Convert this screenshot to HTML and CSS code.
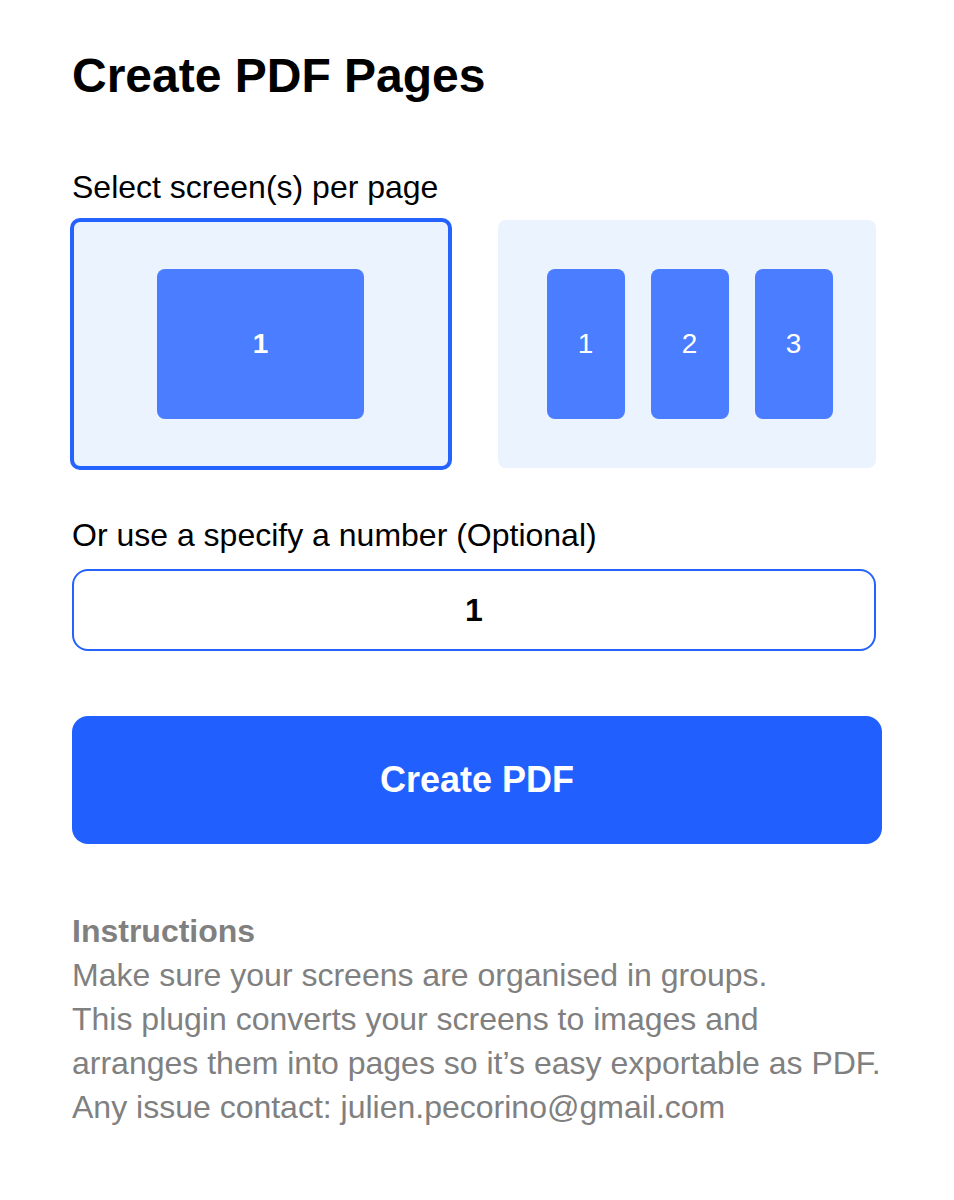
FILE: index.html
```html
<!DOCTYPE html>
<html lang="en">
<head>
<meta charset="utf-8">
<title>Create PDF Pages</title>
<link rel="stylesheet" href="styles.css">
</head>
<body>
<main class="app">
  <h1 class="title">Create PDF Pages</h1>

  <p class="label">Select screen(s) per page</p>
  <div class="options">
    <div class="option option-selected">
      <div class="screen screen-wide screen-bold">1</div>
    </div>
    <div class="option">
      <div class="screen screen-tall">1</div>
      <div class="screen screen-tall">2</div>
      <div class="screen screen-tall">3</div>
    </div>
  </div>

  <p class="label label-number">Or use a specify a number (Optional)</p>
  <input class="number-input" type="text" value="1">

  <button class="create-btn" type="button">Create PDF</button>

  <section class="instructions">
    <h2 class="instructions-title">Instructions</h2>
    <p class="instructions-line">Make sure your screens are organised in groups.</p>
    <p class="instructions-line">This plugin converts your screens to images and</p>
    <p class="instructions-line">arranges them into pages so it’s easy exportable as PDF.</p>
    <p class="instructions-line">Any issue contact: julien.pecorino@gmail.com</p>
  </section>
</main>
</body>
</html>
```

FILE: styles.css
```css
* {
  box-sizing: border-box;
}

html, body {
  margin: 0;
  padding: 0;
  background: #ffffff;
}

body {
  font-family: "Liberation Sans", Arial, Helvetica, sans-serif;
  color: #000000;
}

.app {
  padding: 48px 0 40px 72px;
  width: 954px;
}

.title {
  margin: 0;
  font-size: 48px;
  line-height: 56px;
  font-weight: 700;
}

.label {
  margin: 61px 0 0 0;
  font-size: 32px;
  line-height: 44px;
  font-weight: 400;
}

.label-number {
  margin-top: 45px;
}

.options {
  display: flex;
  gap: 48px;
  margin-top: 11px;
  width: 804px;
}

.option {
  width: 378px;
  height: 248px;
  background: #ebf3ff;
  border-radius: 8px;
  display: flex;
  align-items: center;
  justify-content: center;
  gap: 26px;
  padding-left: 5px;
}

.option-selected {
  border: 2px solid #2563ff;
  box-shadow: 0 0 0 2px #2563ff;
  padding-left: 0;
  padding-right: 1px;
}

.screen {
  background: #4a7dff;
  border-radius: 8px;
  height: 150px;
  color: #ffffff;
  font-size: 28px;
  display: flex;
  align-items: center;
  justify-content: center;
}

.screen-wide {
  width: 207px;
}

.screen-tall {
  width: 78px;
}

.screen-bold {
  font-weight: 700;
}

.number-input {
  display: block;
  margin-top: 12px;
  width: 804px;
  height: 82px;
  border: 2px solid #2563ff;
  border-radius: 16px;
  background: #ffffff;
  font-family: "Liberation Sans", Arial, Helvetica, sans-serif;
  font-size: 32px;
  font-weight: 700;
  color: #000000;
  text-align: center;
  padding: 0;
  outline: none;
}

.create-btn {
  display: block;
  margin-top: 65px;
  width: 810px;
  height: 128px;
  border: none;
  border-radius: 16px;
  background: #2160ff;
  color: #ffffff;
  font-family: "Liberation Sans", Arial, Helvetica, sans-serif;
  font-size: 36px;
  font-weight: 700;
  padding: 0;
}

.instructions {
  margin-top: 65px;
  color: #808080;
  font-size: 32px;
  line-height: 44px;
}

.instructions-title {
  margin: 0;
  font-size: 32px;
  line-height: 44px;
  font-weight: 700;
}

.instructions-line {
  margin: 0;
}
```
